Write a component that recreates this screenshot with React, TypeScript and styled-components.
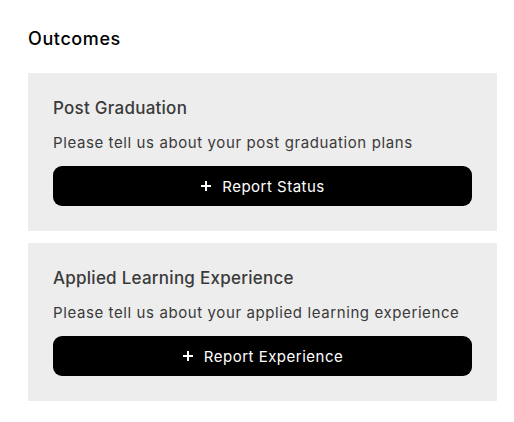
import React from "react";
import styled, { createGlobalStyle } from "styled-components";

const Global = createGlobalStyle`
  html, body { margin: 0; padding: 0; background: #ffffff; }
  body { font-family: Inter, "Open Sans", Arial, sans-serif; -webkit-font-smoothing: antialiased; }
  * { box-sizing: border-box; }
`;

const Page = styled.div`
  padding: 28px 17px 21px 28px;
  display: flex;
  flex-direction: column;
`;

const Heading = styled.h2`
  margin: 0 0 23px;
  font-size: 18px;
  line-height: 22px;
  font-weight: 500;
  letter-spacing: 0.6px;
  color: #000;
`;

const List = styled.div`
  display: flex;
  flex-direction: column;
  gap: 12px;
`;

const Card = styled.section`
  background: #ededed;
  padding: 24px 25px 25px;
  display: flex;
  flex-direction: column;
`;

const Title = styled.h3`
  margin: 0 0 14px;
  font-size: 17px;
  line-height: 22px;
  font-weight: 500;
  letter-spacing: 0.25px;
  color: #3a3a3a;
`;

const Desc = styled.p`
  margin: 0 0 13px;
  font-size: 15px;
  line-height: 20px;
  font-weight: 400;
  letter-spacing: 0.6px;
  color: #3a3a3a;
`;

const Button = styled.button`
  height: 40px;
  width: 100%;
  border: none;
  border-radius: 9px;
  background: #000;
  color: #fff;
  font-family: inherit;
  font-size: 15px;
  letter-spacing: 0.5px;
  display: flex;
  align-items: center;
  justify-content: center;
  gap: 10px;
  cursor: pointer;
`;

const Plus = () => (
  <svg width="12" height="12" viewBox="0 0 12 12" aria-hidden="true">
    <path d="M6 1v10M1 6h10" stroke="#fff" strokeWidth="2" />
  </svg>
);

const items = [
  {
    title: "Post Graduation",
    desc: "Please tell us about your post graduation plans",
    action: "Report Status",
  },
  {
    title: "Applied Learning Experience",
    desc: "Please tell us about your applied learning experience",
    action: "Report Experience",
  },
];

export default function App() {
  return (
    <>
      <Global />
      <Page>
        <Heading>Outcomes</Heading>
        <List>
          {items.map((it) => (
            <Card key={it.title}>
              <Title>{it.title}</Title>
              <Desc>{it.desc}</Desc>
              <Button>
                <Plus />
                <span>{it.action}</span>
              </Button>
            </Card>
          ))}
        </List>
      </Page>
    </>
  );
}
